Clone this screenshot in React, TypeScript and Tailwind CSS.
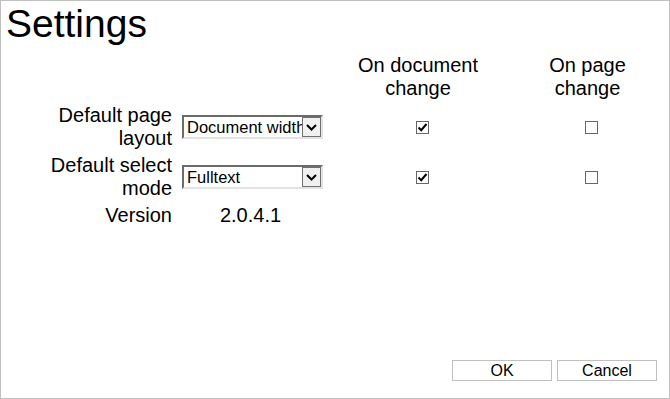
import React from "react";

function Select({ value }: { value: string }) {
  return (
    <div className="ml-[10px] flex h-[24px] w-[141px] shrink-0 border-2 border-t-[#6a6a6a] border-l-[#6a6a6a] border-b-[#e3e3e3] border-r-[#e3e3e3] bg-white">
      <div className="min-w-0 flex-1 overflow-hidden whitespace-nowrap pl-[3px] pt-[1px] text-[16.5px] leading-[19px]">
        {value}
      </div>
      <div className="flex h-[20px] w-[19px] shrink-0 items-center justify-center border border-[#707070] bg-[#f0f0f0]">
        <svg width="11" height="7" viewBox="0 0 11 7">
          <path d="M1 1 L5.5 5.5 L10 1" fill="none" stroke="#000" strokeWidth="2" />
        </svg>
      </div>
    </div>
  );
}

function Check({ checked }: { checked: boolean }) {
  return (
    <div className="ml-[8px] flex h-[13px] w-[13px] items-center justify-center border border-[#666] bg-white">
      {checked && (
        <svg width="11" height="11" viewBox="0 0 11 11">
          <path d="M1.5 5.5 L4.2 8.2 L9.5 2" fill="none" stroke="#000" strokeWidth="2" />
        </svg>
      )}
    </div>
  );
}

export default function App() {
  const rows = [
    { label: ["Default page", "layout"], value: "Document width", doc: true, page: false },
    { label: ["Default select", "mode"], value: "Fulltext", doc: true, page: false },
  ];

  return (
    <div className="flex h-[399px] w-[670px] flex-col border border-[#c0c0c0] bg-white font-['Liberation_Sans',Arial,sans-serif] text-black">
      <h1 className="pl-[5px] text-[39px] leading-[45px]">Settings</h1>

      <div className="mt-[8px] grid grid-cols-[171px_150px_192px_147px] gap-y-[4px] text-[20px] leading-[23px]">
        <div />
        <div />
        <div className="text-center">
          On document
          <br />
          change
        </div>
        <div className="text-center">
          On page
          <br />
          change
        </div>

        {rows.map((r) => (
          <React.Fragment key={r.value}>
            <div className="text-right">
              {r.label[0]}
              <br />
              {r.label[1]}
            </div>
            <div className="flex items-center">
              <Select value={r.value} />
            </div>
            <div className="flex items-center justify-center">
              <Check checked={r.doc} />
            </div>
            <div className="flex items-center justify-center">
              <Check checked={r.page} />
            </div>
          </React.Fragment>
        ))}

        <div className="text-right">Version</div>
        <div className="ml-[10px] w-[141px] pr-[4px] text-center">2.0.4.1</div>
        <div />
        <div />
      </div>

      <div className="flex-1" />

      <div className="flex justify-end gap-[5px] pb-[17px] pr-[12px]">
        <button className="h-[21px] w-[100px] border border-[#c0c0c0] bg-white text-[16px] leading-[19px]">OK</button>
        <button className="h-[21px] w-[100px] border border-[#c0c0c0] bg-white text-[16px] leading-[19px]">Cancel</button>
      </div>
    </div>
  );
}
